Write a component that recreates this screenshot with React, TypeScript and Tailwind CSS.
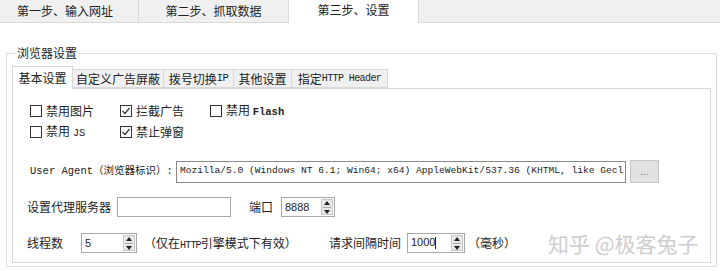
import React from "react";

const cjk = "font-['Noto_Sans_CJK_SC',sans-serif]";
const mono = "font-['Liberation_Mono','Noto_Sans_CJK_SC',monospace]";

const Check = ({ label, checked }: { label: React.ReactNode; checked?: boolean }) => (
  <div className="flex items-center gap-[4px] h-[14px]">
    <div className="w-[12px] h-[12px] border border-[#333] bg-white flex items-center justify-center">
      {checked && (
        <svg width="10" height="10" viewBox="0 0 10 10">
          <path d="M1.5 5 L4 7.5 L8.5 2" fill="none" stroke="#333" strokeWidth="1.2" />
        </svg>
      )}
    </div>
    <span className="text-[12px] leading-[14px] text-[#222]">{label}</span>
  </div>
);

const Spin = () => (
  <div className="w-[12px] h-[16px] bg-[#e8e8e8] border border-[#c8c8c8] flex flex-col items-center justify-center gap-[2px]">
    <svg width="6" height="4" viewBox="0 0 6 4">
      <path d="M0 4 L3 0 L6 4 Z" fill="#222" />
    </svg>
    <div className="w-[8px] h-px bg-[#aaa]" />
    <svg width="6" height="4" viewBox="0 0 6 4">
      <path d="M0 0 L3 4 L6 0 Z" fill="#222" />
    </svg>
  </div>
);

const NumBox = ({ value, w, cursor }: { value: string; w: string; cursor?: boolean }) => (
  <div className={`${w} h-[20px] border border-[#a8a8a8] bg-white flex items-center pl-[3px] pr-[1px]`}>
    <span className="text-[11px] font-['Liberation_Sans',sans-serif] text-[#222] flex-1 leading-none">
      {value}
      {cursor && <span className="inline-block w-px h-[12px] bg-[#222] align-middle" />}
    </span>
    <Spin />
  </div>
);

export default function App() {
  return (
    <div className={`w-[720px] h-[271px] bg-white overflow-hidden ${cjk} text-[#222]`}>
      {/* step tabs */}
      <div className="flex h-[23px]">
        <div className="w-[139px] h-[23px] bg-[#f0f0f0] border-r border-b border-[#d9d9d9] flex items-center justify-center pr-[8px] text-[12px]">
          第一步、输入网址
        </div>
        <div className="w-[150px] h-[23px] bg-[#f0f0f0] border-r border-b border-[#d9d9d9] flex items-center justify-center text-[12px]">
          第二步、抓取数据
        </div>
        <div className="w-[129px] h-[23px] bg-white flex items-start justify-center pt-[1px] text-[12px]">
          第三步、设置
        </div>
        <div className="flex-1 h-[23px] bg-[#f0f0f0] border-l border-b border-[#d9d9d9]" />
      </div>

      {/* group box */}
      <fieldset className="ml-[6px] mt-[23px] w-[711px] h-[221px] border border-[#dcdcdc] px-[5px] pb-[4px]">
        <legend className="ml-[3px] px-[2px] text-[12px] leading-[14px]">浏览器设置</legend>

        <div className="mt-[6px] flex flex-col">
          {/* inner tabs */}
          <div className="flex items-end h-[22px]">
            <div className="w-[61px] h-[23px] bg-white border border-b-0 border-[#d9d9d9] flex items-center justify-center text-[12px] relative z-10 -mb-px">
              基本设置
            </div>
            <div className="w-[91px] h-[19px] bg-[#f0f0f0] border border-l-0 border-[#d9d9d9] flex items-center justify-center text-[12px]">
              自定义广告屏蔽
            </div>
            <div className="w-[70px] h-[19px] bg-[#f0f0f0] border border-l-0 border-[#d9d9d9] flex items-center justify-center text-[12px]">
              拨号切换<span className={`${mono} text-[10.5px] tracking-[-0.5px]`}>IP</span>
            </div>
            <div className="w-[58px] h-[19px] bg-[#f0f0f0] border border-l-0 border-[#d9d9d9] flex items-center justify-center text-[12px]">
              其他设置
            </div>
            <div className="w-[96px] h-[19px] bg-[#f0f0f0] border border-l-0 border-[#d9d9d9] flex items-center justify-center text-[12px] whitespace-nowrap">
              指定<span className={`${mono} text-[10px] tracking-[-0.6px]`}>HTTP Header</span>
            </div>
          </div>

          {/* panel */}
          <div className="w-[699px] h-[175px] border border-[#d9d9d9] bg-white pl-[17px] pt-[15px] flex flex-col">
            <div className="grid grid-cols-[90px_90px_90px] gap-y-[7px]">
              <Check label="禁用图片" />
              <Check label="拦截广告" checked />
              <Check label={<>禁用 <span className={`${mono} text-[10.5px] font-bold`}>Flash</span></>} />
              <Check label={<>禁用 <span className={`${mono} text-[10.5px]`}>JS</span></>} />
              <Check label="禁止弹窗" checked />
            </div>

            <div className="flex items-center mt-[21px] h-[23px]">
              <span className={`${mono} text-[10.5px] w-[146px] whitespace-nowrap`}>
                User Agent（浏览器标识）:
              </span>
              <div className="w-[450px] h-[22px] border border-[#8a8a8a] bg-white flex items-center pl-[3px] overflow-hidden">
                <span className={`${mono} text-[9.6px] whitespace-nowrap`}>
                  Mozilla/5.0 (Windows NT 6.1; Win64; x64) AppleWebKit/537.36 (KHTML, like Gecl
                </span>
              </div>
              <div className="ml-[4px] w-[29px] h-[23px] bg-[#e1e1e1] border border-[#c6c6c6] flex items-center justify-center text-[10px] text-[#888] leading-none pb-[2px]">
                ...
              </div>
            </div>

            <div className="flex items-center mt-[14px] h-[20px] -ml-[3px]">
              <span className="text-[12px] w-[90px]">设置代理服务器</span>
              <div className="w-[114px] h-[20px] border border-[#a8a8a8] bg-white" />
              <span className="text-[12px] ml-[18px] w-[32px]">端口</span>
              <NumBox value="8888" w="w-[54px]" />
            </div>

            <div className="flex items-center mt-[14px] h-[24px] -ml-[3px]">
              <span className="text-[12px] w-[54px]">线程数</span>
              <NumBox value="5" w="w-[56px]" />
              <span className="text-[12px] ml-[7px] w-[185px] whitespace-nowrap">
                （仅在<span className={`${mono} text-[10px] tracking-[-0.8px]`}>HTTP</span>引擎模式下有效）
              </span>
              <span className="text-[12px] w-[78px]">请求间隔时间</span>
              <NumBox value="1000" w="w-[58px]" cursor />
              <span className="text-[12px] ml-[3px] whitespace-nowrap">（毫秒）</span>
              <span className="ml-[32px] text-[21px] text-[#cdcdcd] whitespace-nowrap leading-none">
                知乎 @极客兔子
              </span>
            </div>
          </div>
        </div>
      </fieldset>
    </div>
  );
}
